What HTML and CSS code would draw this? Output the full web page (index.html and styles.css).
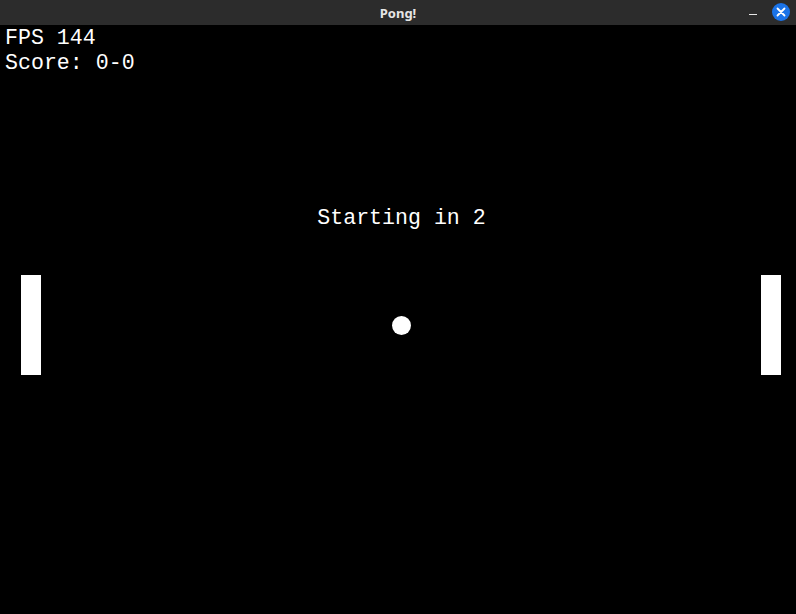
FILE: index.html
```html
<!DOCTYPE html>
<html>
<head>
<meta charset="utf-8">
<link rel="stylesheet" href="styles.css">
</head>
<body>
<div class="window">
  <div class="titlebar">
    <div class="title">Pong!</div>
    <div class="controls">
      <span class="minimize"></span>
      <span class="close">
        <svg width="18" height="18" viewBox="0 0 18 18"><circle cx="9" cy="9" r="9" fill="#1a73e8"/><path d="M5.5 5.5 L12.5 12.5 M12.5 5.5 L5.5 12.5" stroke="#fff" stroke-width="1.8" stroke-linecap="round"/></svg>
      </span>
    </div>
  </div>
  <div class="game">
    <div class="hud">
      <div class="line">FPS 144</div>
      <div class="line">Score: 0-0</div>
    </div>
    <div class="message">Starting in 2</div>
    <div class="paddle left"></div>
    <div class="paddle right"></div>
    <div class="ball"></div>
  </div>
</div>
</body>
</html>
```
FILE: styles.css
```css
html, body {
  margin: 0;
  padding: 0;
  background: #000;
}
.window {
  width: 796px;
  height: 614px;
  display: flex;
  flex-direction: column;
  overflow: hidden;
}
.titlebar {
  height: 25px;
  background: #2c2c2c;
  position: relative;
  display: flex;
  align-items: center;
  justify-content: center;
  flex: none;
}
.title {
  color: #e6e6e6;
  font-family: "Noto Sans", sans-serif;
  font-weight: bold;
  font-size: 13px;
}
.controls {
  position: absolute;
  right: 6px;
  top: 3px;
  display: flex;
  align-items: center;
  gap: 15px;
}
.minimize {
  width: 8px;
  height: 1px;
  background: #e6e6e6;
  margin-top: 4px;
}
.close {
  width: 18px;
  height: 18px;
  display: block;
}
.close svg { display: block; }
.game {
  position: relative;
  flex: 1;
  background: #000;
  font-family: "Liberation Mono", monospace;
  color: #fff;
  font-size: 21.6px;
}
.hud {
  padding: 1px 0 0 5px;
}
.line {
  line-height: 25px;
}
.message {
  position: absolute;
  left: 0;
  right: 0;
  top: 181px;
  text-align: center;
  padding-left: 7px;
  line-height: 25px;
}
.paddle {
  position: absolute;
  top: 250px;
  width: 20px;
  height: 100px;
  background: #fff;
}
.paddle.left { left: 21px; }
.paddle.right { left: 761px; }
.ball {
  position: absolute;
  left: 392px;
  top: 291px;
  width: 19px;
  height: 19px;
  border-radius: 50%;
  background: #fff;
}
```
